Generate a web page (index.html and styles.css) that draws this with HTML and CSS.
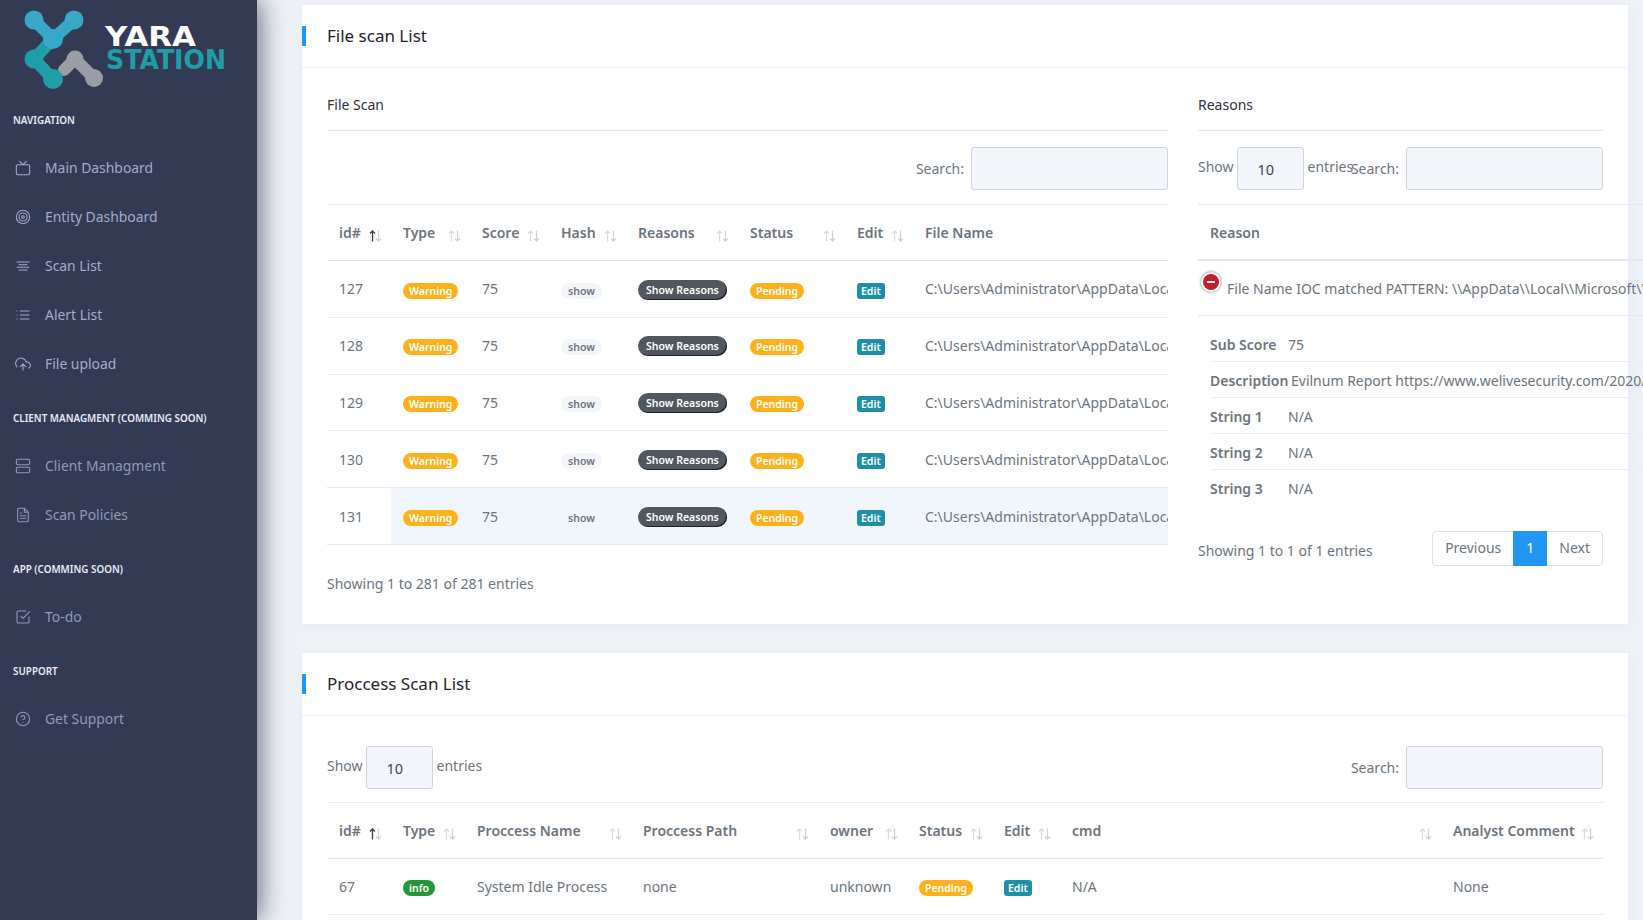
FILE: index.html
```html
<!DOCTYPE html>
<html lang="en">
<head>
<meta charset="utf-8">
<title>Yara Station</title>
<link rel="stylesheet" href="styles.css">
</head>
<body>
<svg class="defs" width="0" height="0" aria-hidden="true">
  <symbol id="sort" viewBox="0 0 13 12">
    <path class="up" d="M3.5 11.5V1M1 3.5 3.5 1 6 3.5"/>
    <path class="down" d="M9.5.5V11M7 8.5 9.5 11 12 8.5"/>
  </symbol>
</svg>
<aside class="sidebar">
  <svg class="logo" width="257" height="100" viewBox="0 0 257 100">
    <g fill="none" stroke-linecap="round" stroke-linejoin="round">
      <path d="M64 70 75 59 94 78" stroke="#9a9da5" stroke-width="12"/>
      <path d="M53 39 34 59 53 79" stroke="#1f9ea8" stroke-width="12"/>
      <path d="M34 20 53 39 74 20" stroke="#37a8c8" stroke-width="12"/>
    </g>
    <circle cx="34" cy="20" r="9.5" fill="#37a8c8"/>
    <circle cx="74" cy="20" r="9.5" fill="#37a8c8"/>
    <circle cx="53" cy="39" r="10" fill="#37a8c8"/>
    <circle cx="34" cy="59" r="9.5" fill="#1f9ea8"/>
    <circle cx="53" cy="79" r="10" fill="#1f9ea8"/>
    <circle cx="75" cy="59" r="8.5" fill="#9a9da5"/>
    <circle cx="94" cy="78" r="9" fill="#9a9da5"/>
    <text class="logo-a" x="105" y="46" textLength="91" lengthAdjust="spacingAndGlyphs">YARA</text>
    <text class="logo-b" x="106" y="69" textLength="120" lengthAdjust="spacingAndGlyphs">STATION</text>
  </svg>
  <nav class="nav">
    <h6 class="nav-title first">NAVIGATION</h6>
    <a class="nav-item"><svg class="ico" viewBox="0 0 24 24"><rect x="2" y="7" width="20" height="15" rx="2"/><path d="M17 2l-5 5-5-5"/></svg>Main Dashboard</a>
    <a class="nav-item"><svg class="ico" viewBox="0 0 24 24"><circle cx="12" cy="12" r="10"/><circle cx="12" cy="12" r="6"/><circle cx="12" cy="12" r="2"/></svg>Entity Dashboard</a>
    <a class="nav-item"><svg class="ico" viewBox="0 0 24 24"><path d="M18 10H6M21 6H3M21 14H3M18 18H6"/></svg>Scan List</a>
    <a class="nav-item"><svg class="ico" viewBox="0 0 24 24"><path d="M8 6h13M8 12h13M8 18h13M3 6h.01M3 12h.01M3 18h.01"/></svg>Alert List</a>
    <a class="nav-item"><svg class="ico" viewBox="0 0 24 24"><path d="M16 16l-4-4-4 4M12 12v9M20.39 18.39A5 5 0 0 0 18 9h-1.26A8 8 0 1 0 3 16.3"/></svg>File upload</a>
    <h6 class="nav-title">CLIENT MANAGMENT (COMMING SOON)</h6>
    <a class="nav-item dim"><svg class="ico" viewBox="0 0 24 24"><rect x="2" y="2" width="20" height="8" rx="2"/><rect x="2" y="14" width="20" height="8" rx="2"/><path d="M6 6h.01M6 18h.01"/></svg>Client Managment</a>
    <a class="nav-item dim"><svg class="ico" viewBox="0 0 24 24"><path d="M14 2H6a2 2 0 0 0-2 2v16a2 2 0 0 0 2 2h12a2 2 0 0 0 2-2V8zM14 2v6h6M16 13H8M16 17H8M10 9H8"/></svg>Scan Policies</a>
    <h6 class="nav-title">APP (COMMING SOON)</h6>
    <a class="nav-item dim"><svg class="ico" viewBox="0 0 24 24"><path d="M9 11l3 3L22 4M21 12v7a2 2 0 0 1-2 2H5a2 2 0 0 1-2-2V5a2 2 0 0 1 2-2h11"/></svg>To-do</a>
    <h6 class="nav-title">SUPPORT</h6>
    <a class="nav-item dim"><svg class="ico" viewBox="0 0 24 24"><circle cx="12" cy="12" r="10"/><path d="M9.09 9a3 3 0 0 1 5.83 1c0 2-3 3-3 3M12 17h.01"/></svg>Get Support</a>
  </nav>
</aside>

<main class="main">
  <section class="card">
    <header class="card-head"><h2>File scan List</h2></header>
    <div class="card-body split">
      <div class="col">
        <h3 class="sub">File Scan</h3>
        <div class="tools end">
          <label class="search">Search:<input class="field" type="text"></label>
        </div>
        <table class="tbl file-tbl">
          <colgroup><col class="c1"><col class="c2"><col class="c3"><col class="c4"><col class="c5"><col class="c6"><col class="c7"><col class="c8"></colgroup>
          <thead>
            <tr>
              <th><div class="th">id#<svg class="sort on"><use href="#sort"/></svg></div></th>
              <th><div class="th">Type<svg class="sort"><use href="#sort"/></svg></div></th>
              <th><div class="th">Score<svg class="sort"><use href="#sort"/></svg></div></th>
              <th><div class="th">Hash<svg class="sort"><use href="#sort"/></svg></div></th>
              <th><div class="th">Reasons<svg class="sort"><use href="#sort"/></svg></div></th>
              <th><div class="th">Status<svg class="sort"><use href="#sort"/></svg></div></th>
              <th><div class="th">Edit<svg class="sort"><use href="#sort"/></svg></div></th>
              <th><div class="th">File Name</div></th>
            </tr>
          </thead>
          <tbody>
            <tr><td>127</td><td><span class="pill warn">Warning</span></td><td>75</td><td><span class="pill show">show</span></td><td><span class="btn-reasons">Show Reasons</span></td><td><span class="pill warn">Pending</span></td><td><span class="edit">Edit</span></td><td class="clip">C:\Users\Administrator\AppData\Local\Microsoft\Windows</td></tr>
            <tr><td>128</td><td><span class="pill warn">Warning</span></td><td>75</td><td><span class="pill show">show</span></td><td><span class="btn-reasons">Show Reasons</span></td><td><span class="pill warn">Pending</span></td><td><span class="edit">Edit</span></td><td class="clip">C:\Users\Administrator\AppData\Local\Microsoft\Windows</td></tr>
            <tr><td>129</td><td><span class="pill warn">Warning</span></td><td>75</td><td><span class="pill show">show</span></td><td><span class="btn-reasons">Show Reasons</span></td><td><span class="pill warn">Pending</span></td><td><span class="edit">Edit</span></td><td class="clip">C:\Users\Administrator\AppData\Local\Microsoft\Windows</td></tr>
            <tr><td>130</td><td><span class="pill warn">Warning</span></td><td>75</td><td><span class="pill show">show</span></td><td><span class="btn-reasons">Show Reasons</span></td><td><span class="pill warn">Pending</span></td><td><span class="edit">Edit</span></td><td class="clip">C:\Users\Administrator\AppData\Local\Microsoft\Windows</td></tr>
            <tr class="hl"><td>131</td><td><span class="pill warn">Warning</span></td><td>75</td><td><span class="pill show">show</span></td><td><span class="btn-reasons">Show Reasons</span></td><td><span class="pill warn">Pending</span></td><td><span class="edit">Edit</span></td><td class="clip">C:\Users\Administrator\AppData\Local\Microsoft\Windows</td></tr>
          </tbody>
        </table>
        <p class="info">Showing 1 to 281 of 281 entries</p>
      </div>

      <div class="col">
        <h3 class="sub">Reasons</h3>
        <div class="tools">
          <div class="show-len tight">Show<input class="field num" type="text" value="10">entries</div>
          <label class="search">Search:<input class="field" type="text"></label>
        </div>
        <div class="reason">
          <div class="reason-head">Reason</div>
          <div class="reason-row"><span class="minus"></span><span class="reason-text">File Name IOC matched PATTERN: \\AppData\\Local\\Microsoft\\Windows\\Templates</span></div>
          <dl class="details">
            <div class="detail"><dt>Sub Score</dt><dd>75</dd></div>
            <div class="detail"><dt class="wide">Description</dt><dd>Evilnum Report https://www.welivesecurity.com/2020/07/09/more-evil</dd></div>
            <div class="detail"><dt>String 1</dt><dd>N/A</dd></div>
            <div class="detail"><dt>String 2</dt><dd>N/A</dd></div>
            <div class="detail last"><dt>String 3</dt><dd>N/A</dd></div>
          </dl>
        </div>
        <div class="foot">
          <p class="info-inline">Showing 1 to 1 of 1 entries</p>
          <div class="pager"><a class="pg">Previous</a><a class="pg cur">1</a><a class="pg">Next</a></div>
        </div>
      </div>
    </div>
  </section>

  <section class="card">
    <header class="card-head"><h2>Proccess Scan List</h2></header>
    <div class="card-body proc">
      <div class="tools spread">
        <div class="show-len">Show<input class="field num" type="text" value="10">entries</div>
        <label class="search">Search:<input class="field" type="text"></label>
      </div>
      <table class="tbl proc-tbl">
        <colgroup><col class="p1"><col class="p2"><col class="p3"><col class="p4"><col class="p5"><col class="p6"><col class="p7"><col class="p8"><col class="p9"></colgroup>
        <thead>
          <tr>
            <th><div class="th">id#<svg class="sort on"><use href="#sort"/></svg></div></th>
            <th><div class="th">Type<svg class="sort"><use href="#sort"/></svg></div></th>
            <th><div class="th">Proccess Name<svg class="sort"><use href="#sort"/></svg></div></th>
            <th><div class="th">Proccess Path<svg class="sort"><use href="#sort"/></svg></div></th>
            <th><div class="th">owner<svg class="sort"><use href="#sort"/></svg></div></th>
            <th><div class="th">Status<svg class="sort"><use href="#sort"/></svg></div></th>
            <th><div class="th">Edit<svg class="sort"><use href="#sort"/></svg></div></th>
            <th><div class="th">cmd<svg class="sort"><use href="#sort"/></svg></div></th>
            <th><div class="th">Analyst Comment<svg class="sort"><use href="#sort"/></svg></div></th>
          </tr>
        </thead>
        <tbody>
          <tr><td>67</td><td><span class="pill ok">info</span></td><td>System Idle Process</td><td>none</td><td>unknown</td><td><span class="pill warn">Pending</span></td><td><span class="edit">Edit</span></td><td>N/A</td><td>None</td></tr>
        </tbody>
      </table>
    </div>
  </section>
</main>
</body>
</html>
```
FILE: styles.css
```css
* { box-sizing: border-box; }
html, body { height: 100%; margin: 0; overflow: hidden; }
body {
  display: flex;
  font-family: "Noto Sans", "Open Sans", sans-serif;
  font-size: 14px;
  color: #6c757d;
  background: #eef1f6;
}
.defs { position: absolute; }

/* sidebar */
.sidebar {
  flex: 0 0 257px;
  height: 100vh;
  background: #323a54;
  box-shadow: 3px 0 24px rgba(40, 50, 80, .7);
  position: relative;
  z-index: 2;
}
.logo { display: block; }
.logo-a, .logo-b { font-family: "DejaVu Sans", sans-serif; font-weight: 700; font-size: 26px; }
.logo-a { fill: #fff; }
.logo-b { fill: #1f9ea8; }
.nav { display: flex; flex-direction: column; }
.nav-title {
  margin: 0;
  padding: 1px 0 0 13px;
  height: 24px;
  line-height: 23px;
  font-size: 9.9px;
  font-weight: 600;
  color: #e9ecf3;
  white-space: nowrap;
}
.nav-item + .nav-title { margin-top: 18px; }
.nav-title.first { margin-top: 8px; }
.nav-title + .nav-item { margin-top: 11px; }
.nav-item {
  display: flex;
  align-items: center;
  height: 49px;
  padding-left: 15px;
  font-size: 13.9px;
  color: #a3adc7;
  white-space: nowrap;
}
.nav-item.dim { color: #8f9bb8; }
.ico {
  width: 16px;
  height: 16px;
  margin-right: 14px;
  fill: none;
  stroke: currentColor;
  stroke-width: 1.6;
  stroke-linecap: round;
  stroke-linejoin: round;
  flex: none;
}

/* main */
.main {
  flex: 1;
  min-width: 0;
  height: 100vh;
  padding: 5px 15px 0 45px;
  overflow: hidden;
  display: flex;
  flex-direction: column;
  gap: 29px;
}
.card { background: #fff; flex: none; box-shadow: 0 2px 12px rgba(60, 80, 120, .04); }
.card-head {
  height: 63px;
  padding: 0 0 2px 25px;
  border-bottom: 1px solid #eef0f3;
  display: flex;
  align-items: center;
  position: relative;
}
.card-head::before {
  content: "";
  position: absolute;
  left: 0;
  top: 21px;
  width: 4px;
  height: 20px;
  background: #2196f3;
}
.card-head h2 { margin: 0; font-size: 17px; font-weight: 400; color: #1f2328; }
.card-body { padding: 27px 25px 0; }
.split {
  display: grid;
  grid-template-columns: 841px 405px;
  column-gap: 30px;
  height: 556px;
}
.col { min-width: 0; }
.sub {
  margin: 0;
  height: 36px;
  line-height: 20px;
  font-size: 14px;
  font-weight: 400;
  color: #2d3238;
  border-bottom: 1px solid #e3e5e8;
}
.tools {
  display: flex;
  justify-content: space-between;
  align-items: center;
  height: 43px;
  margin: 15px 0;
}
.tools.end { justify-content: flex-end; }
.tools.spread { margin: 0 0 14px; }
.search { display: flex; align-items: center; gap: 7px; white-space: nowrap; padding-top: 1px; }
.show-len { display: flex; align-items: center; white-space: nowrap; padding-bottom: 3px; }
.show-len.tight { flex: 0 0 150px; min-width: 0; }
.field {
  width: 197px;
  height: 43px;
  border: 1px solid #cfd4dc;
  border-radius: 3px;
  background: #f2f5fa;
  font: inherit;
  color: #3f454b;
}
.num { flex: none; width: 67px; margin: 4px 4px 0 3px; padding: 2px 0 0 20px; font-size: 14.5px; }

/* tables */
.tbl {
  width: 100%;
  table-layout: fixed;
  border-collapse: collapse;
  border-top: 1px solid #e6e8eb;
}
.tbl th {
  height: 56px;
  padding: 0 9px 0 12px;
  text-align: left;
  font-weight: 600;
  color: #6c757d;
  border-bottom: 1px solid #e3e5e8;
  white-space: nowrap;
}
.th { display: flex; justify-content: space-between; align-items: center; }
.sort {
  --up-c: #d8dbdf;
  flex: none;
  width: 13px;
  height: 12px;
  margin-top: 6px;
  fill: none;
  stroke-width: 1.3;
}
.sort.on { --up-c: #3b4046; }
.up { stroke: var(--up-c); }
.down { stroke: #cdd0d5; }
.tbl td {
  height: 56.8px;
  padding: 0 12px;
  border-bottom: 1px solid #e6e8eb;
  white-space: nowrap;
}
.proc-tbl td { height: 56px; }
.hl td:not(:first-child) { background: #f1f6fc; }
.clip { overflow: hidden; padding-right: 0 !important; }

.c1 { width: 64px; } .c2 { width: 79px; } .c3 { width: 79px; } .c4 { width: 77px; }
.c5 { width: 112px; } .c6 { width: 107px; } .c7 { width: 68px; } .c8 { width: 255px; }
.p1 { width: 64px; } .p2 { width: 74px; } .p3 { width: 166px; } .p4 { width: 187px; } .p5 { width: 89px; }
.p6 { width: 85px; } .p7 { width: 68px; } .p8 { width: 381px; } .p9 { width: 162px; }

.pill {
  display: inline-block;
  height: 16px;
  line-height: 16px;
  padding: 0 6px;
  border-radius: 8px;
  font-size: 10.5px;
  font-weight: 600;
  vertical-align: middle;
}
.warn { background: #ffb11b; color: #fff; }
.ok { background: #23963a; color: #fff; }
.show { background: #f4f5f8; color: #6c757d; padding: 0 7px; }
.hl .show { background: transparent; }
.btn-reasons {
  display: inline-block;
  height: 20px;
  line-height: 20px;
  padding: 0 8px;
  border-radius: 10px;
  font-size: 10.5px;
  font-weight: 600;
  color: #fff;
  background: #50575e;
  box-shadow: inset -1px -1px 0 #1d2125;
  vertical-align: middle;
}
.edit {
  display: inline-block;
  height: 16px;
  line-height: 16px;
  padding: 0 4px;
  border-radius: 3px;
  font-size: 10.5px;
  font-weight: 600;
  color: #fff;
  background: #1f8fa8;
  vertical-align: middle;
}
.info { margin: 29px 0 0; line-height: 20px; }

/* reasons panel */
.reason { width: 460px; }
.reason-head {
  height: 57px;
  line-height: 56px;
  padding-left: 12px;
  font-weight: 600;
  border-top: 1px solid #e6e8eb;
  border-bottom: 2px solid #e3e5e8;
}
.reason-row {
  display: flex;
  height: 55px;
  padding: 11px 0 0 3px;
  border-bottom: 1px solid #e6e8eb;
  white-space: nowrap;
}
.minus {
  flex: none;
  width: 20px;
  height: 20px;
  border-radius: 50%;
  background: #c81e2b;
  border: 2px solid #fff;
  box-shadow: 0 0 3px rgba(0, 0, 0, .55);
  position: relative;
}
.minus::after {
  content: "";
  position: absolute;
  left: 4px;
  right: 4px;
  top: 7px;
  height: 2px;
  background: #fff;
}
.reason-text { margin: 7px 0 0 6px; line-height: 20px; }
.details { margin: 10px 0 0; padding-left: 12px; }
.detail {
  display: flex;
  height: 36px;
  padding-top: 2px;
  align-items: center;
  border-bottom: 1px solid #eceef0;
  white-space: nowrap;
}
.detail.last { border-bottom: 0; padding-top: 1px; }
.detail dt { flex: 0 0 78px; font-weight: 600; }
.detail dt.wide { flex-basis: 81px; }
.detail dd { margin: 0; }
.foot {
  display: flex;
  justify-content: space-between;
  align-items: flex-start;
  margin-top: 25px;
}
.info-inline { margin: 10px 0 0; line-height: 20px; }
.pager { display: flex; height: 35px; border: 1px solid #dee2e6; border-radius: 4px; }
.pg { padding: 0 12px; line-height: 32px; }
.pg.cur { padding: 0 13px; background: #2196f3; color: #fff; margin: -1px 0; line-height: 34px; }

.proc { padding-top: 29px; padding-bottom: 40px; }
```
